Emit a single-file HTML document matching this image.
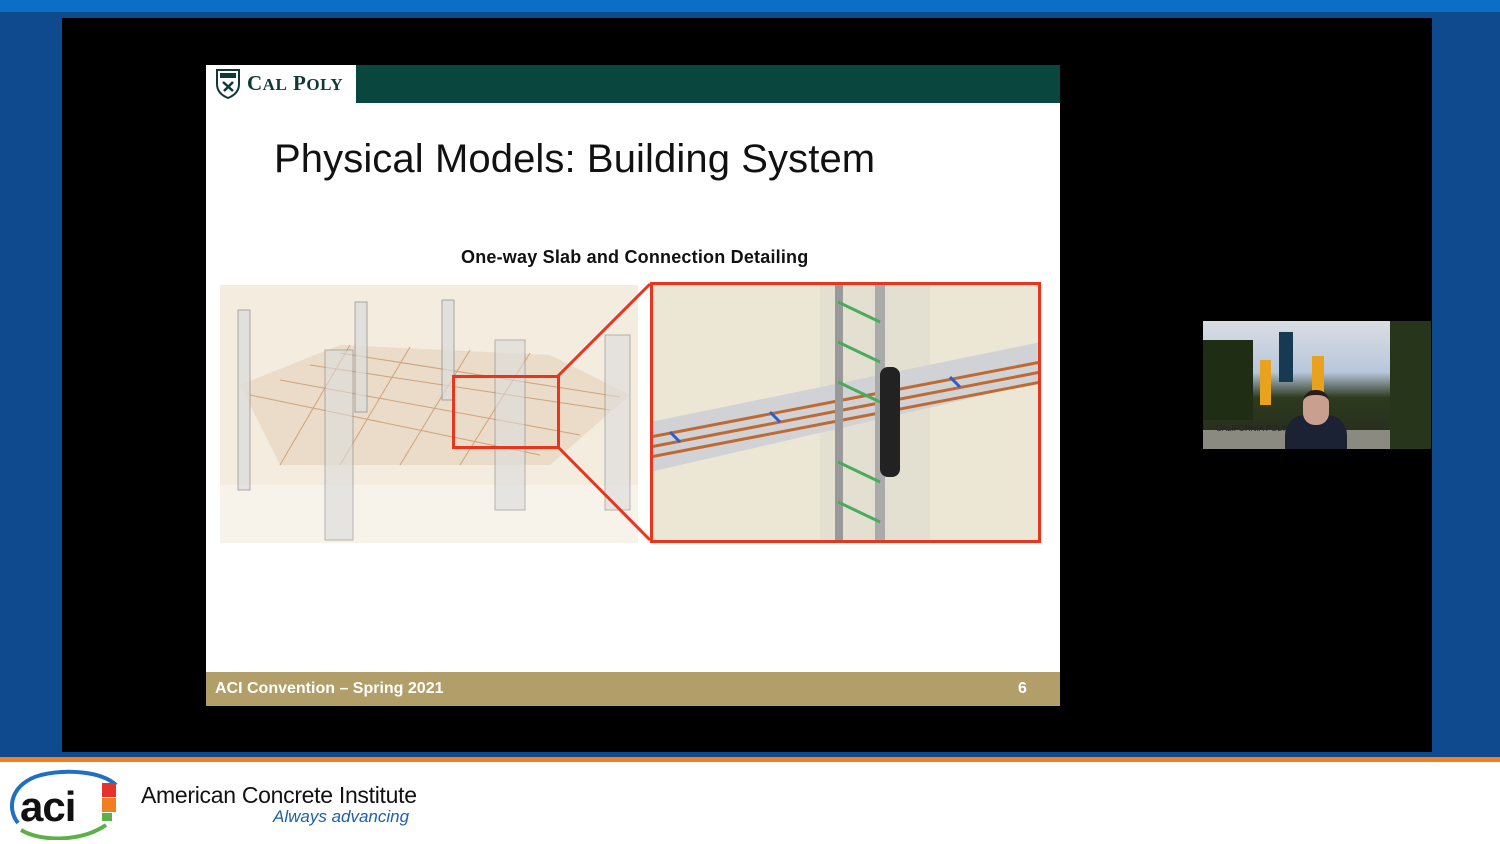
<!DOCTYPE html>
<html><head><meta charset="utf-8"><style>
*{margin:0;padding:0}
body{width:1500px;height:844px;overflow:hidden;background:#fff;position:relative;font-family:"Liberation Sans",sans-serif}
.a{position:absolute}
</style></head><body>
<div class="a" style="left:0;top:0;width:1500px;height:12px;background:#0b6fc6"></div>
<div class="a" style="left:0;top:12px;width:1500px;height:745px;background:#0f4a8e"></div>
<div class="a" style="left:62px;top:18px;width:1370px;height:734px;background:#000"></div>
<div class="a" style="left:0;top:757px;width:1500px;height:5px;background:#f07f22"></div>
<!-- slide -->
<div class="a" style="left:206px;top:65px;width:854px;height:641px;background:#fff"></div>
<div class="a" style="left:356px;top:65px;width:704px;height:38px;background:#08463e"></div>
<svg class="a" style="left:214px;top:68px" width="28" height="32" viewBox="0 0 28 32"><path d="M3 2h22v14c0 8-6 12-11 14C9 28 3 24 3 16z" fill="none" stroke="#0f3a33" stroke-width="2"/><path d="M6 5h16v5H6z" fill="#0f3a33"/><path d="M9 14l10 9M19 14l-9 9" stroke="#0f3a33" stroke-width="2.5"/></svg>
<div class="a" style="left:247px;top:71px;font:bold 21px 'Liberation Serif',serif;color:#0f3a33;letter-spacing:0.5px">C<span style="font-size:17px">AL</span> P<span style="font-size:17px">OLY</span></div>
<div class="a" style="left:274px;top:137px;font-size:40px;color:#111;letter-spacing:0.1px">Physical Models: Building System</div>
<div class="a" style="left:461px;top:247px;font-weight:bold;font-size:18px;color:#111;letter-spacing:0.2px">One-way Slab and Connection Detailing</div>
<!-- left photo -->
<svg class="a" style="left:220px;top:285px" width="418" height="258" viewBox="0 0 418 258">
<rect width="418" height="258" fill="#f3ecdf"/>
<rect x="0" y="200" width="418" height="58" fill="#f7f2ea"/>
<polygon points="20,100 120,60 330,70 410,110 330,180 60,180" fill="#eadcc8"/>
<g stroke="#c9946a" stroke-width="1" opacity=".8">
<line x1="30" y1="110" x2="320" y2="170"/><line x1="60" y1="95" x2="360" y2="150"/><line x1="90" y1="80" x2="390" y2="125"/><line x1="120" y1="68" x2="400" y2="112"/>
<line x1="60" y1="180" x2="130" y2="60"/><line x1="120" y1="180" x2="190" y2="62"/><line x1="180" y1="180" x2="250" y2="65"/><line x1="240" y1="180" x2="310" y2="68"/>
</g>
<g fill="#dcdcdc" stroke="#888" stroke-width="1">
<rect x="18" y="25" width="12" height="180" opacity=".7"/><rect x="135" y="17" width="12" height="110" opacity=".7"/><rect x="222" y="15" width="12" height="100" opacity=".7"/>
<rect x="105" y="65" width="28" height="190" opacity=".6"/><rect x="275" y="55" width="30" height="170" opacity=".6"/><rect x="385" y="50" width="25" height="175" opacity=".6"/>
</g>
</svg>
<!-- right photo -->
<svg class="a" style="left:650px;top:282px" width="391" height="261" viewBox="0 0 391 261">
<rect width="391" height="261" fill="#ece7d4"/>
<rect x="170" y="0" width="110" height="261" fill="#e0ddd2" opacity=".7"/>
<polygon points="0,140 391,60 391,100 0,190" fill="#d0d2d6"/>
<g stroke="#c06a32" stroke-width="3"><line x1="0" y1="155" x2="391" y2="80"/><line x1="0" y1="165" x2="391" y2="90"/><line x1="0" y1="175" x2="391" y2="100"/></g>
<g stroke="#2b5fd0" stroke-width="3"><line x1="20" y1="150" x2="30" y2="160"/><line x1="120" y1="130" x2="130" y2="140"/><line x1="300" y1="95" x2="310" y2="105"/></g>
<rect x="185" y="0" width="8" height="261" fill="#999"/><rect x="225" y="0" width="10" height="261" fill="#aaa"/>
<path d="M188 20l42 20M188 60l42 20M188 100l42 20M188 180l42 20M188 220l42 20" stroke="#4caa5a" stroke-width="3"/>
<rect x="230" y="85" width="20" height="110" rx="8" fill="#222"/>
<rect x="1.5" y="1.5" width="388" height="258" fill="none" stroke="#e8351e" stroke-width="3"/>
</svg>
<svg class="a" style="left:450px;top:280px" width="210" height="265"><rect x="3.5" y="96.5" width="105" height="71" fill="none" stroke="#e8351e" stroke-width="3"/><line x1="108" y1="96" x2="200" y2="4" stroke="#e8351e" stroke-width="3"/><line x1="108" y1="167" x2="200" y2="260" stroke="#e8351e" stroke-width="3"/></svg>
<div class="a" style="left:206px;top:672px;width:854px;height:34px;background:#b19e69"></div>
<div class="a" style="left:215px;top:680px;font-weight:bold;font-size:16px;color:#fff">ACI Convention – Spring 2021</div>
<div class="a" style="left:1018px;top:680px;font-weight:bold;font-size:16px;color:#fff">6</div>
<!-- video -->
<div class="a" style="left:1203px;top:321px;width:228px;height:128px;background:linear-gradient(#d9dde3 0,#b9c7db 40%,#2c3a1e 60%,#2a301f 85%,#8a8a80 85%)"></div>
<div class="a" style="left:1203px;top:340px;width:50px;height:80px;background:#1f2d15"></div>
<div class="a" style="left:1390px;top:321px;width:41px;height:128px;background:#27351a"></div>
<div class="a" style="left:1260px;top:360px;width:11px;height:45px;background:#e8a21d"></div>
<div class="a" style="left:1279px;top:332px;width:14px;height:50px;background:#153a52"></div>
<div class="a" style="left:1312px;top:356px;width:12px;height:36px;background:#e8a21d"></div>
<div class="a" style="left:1285px;top:415px;width:62px;height:34px;background:#1a2233;border-radius:20px 20px 0 0"></div>
<div class="a" style="left:1303px;top:390px;width:26px;height:30px;background:#c9a090;border-radius:12px;border-top:5px solid #2a1c18"></div>
<div class="a" style="left:1216px;top:424px;font-size:8px;color:#222">CALIFORNIA POLY</div>
<!-- footer -->
<svg class="a" style="left:6px;top:768px" width="118" height="72" viewBox="0 0 118 72">
<path d="M12 55C0 40 5 15 35 7c25-6 60-4 75 10" fill="none" stroke="#1f6fc2" stroke-width="4"/>
<path d="M15 62c20 12 60 12 85-5" fill="none" stroke="#5cb046" stroke-width="4"/>
<path d="M96 15h14v14H96z" fill="#e5322a"/><path d="M96 30h14v14H96z" fill="#f07f22"/><path d="M96 45h10v8H96z" fill="#5cb046"/>
<text x="14" y="53" font-family="Liberation Sans" font-weight="bold" font-size="42" fill="#111" letter-spacing="-1">aci</text>
</svg>
<div class="a" style="left:141px;top:782px;font-size:23px;color:#111;letter-spacing:-0.3px">American Concrete Institute</div>
<div class="a" style="left:273px;top:807px;font-size:17px;font-style:italic;color:#1f5fa8">Always advancing</div>
</body></html>
